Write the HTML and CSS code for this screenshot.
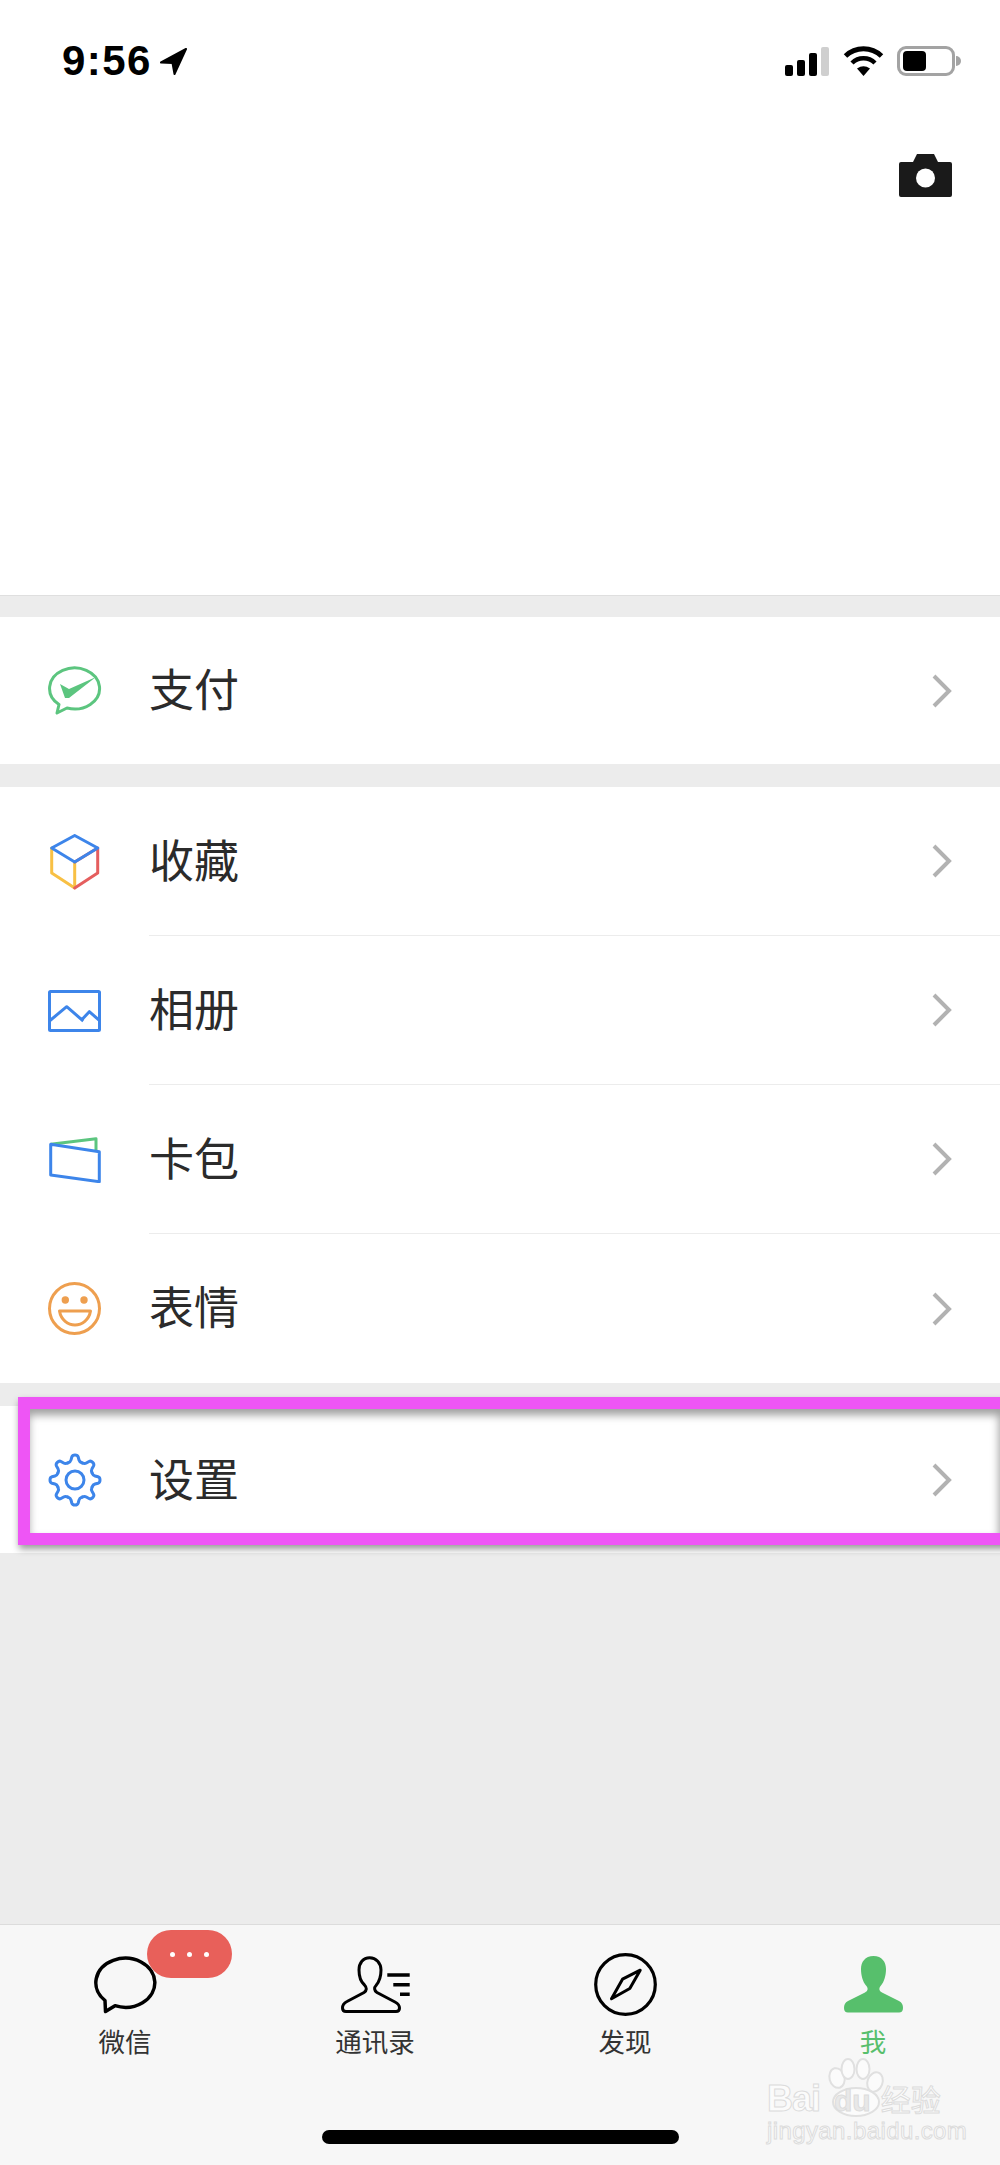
FILE: index.html
```html
<!DOCTYPE html>
<html lang="zh-CN">
<head>
    <meta charset="UTF-8">
    <title>我</title>
    <link rel="stylesheet" href="styles.css">
</head>
<body>
<div class="page">
    <div class="profile">
        <div class="status-bar">
            <div class="status-left">
                <span class="time">9:56</span>
                <svg class="location" width="27" height="27" viewBox="0 0 27 27"><path d="M26 1 L1 14.5 L12.5 15 L14.5 26 Z" fill="#000" stroke="#000" stroke-width="2" stroke-linejoin="round"/></svg>
            </div>
            <div class="status-right">
                <div class="signal">
                    <i class="bar bar-1"></i>
                    <i class="bar bar-2"></i>
                    <i class="bar bar-3"></i>
                    <i class="bar bar-4"></i>
                </div>
                <svg width="41" height="30" viewBox="0 0 41 30"><path d="M2.5 10 A26 26 0 0 1 38.5 10" fill="none" stroke="#000" stroke-width="5"/><path d="M9 17 A16.5 16.5 0 0 1 32 17" fill="none" stroke="#000" stroke-width="4.5"/><path d="M20.5 30 L14 22.5 Q20.5 18 27 22.5 Z" fill="#000"/></svg>
                <div class="battery"><i class="battery-level"></i></div>
            </div>
        </div>
        <div class="camera-row">
            <svg width="53" height="43" viewBox="0 0 53 43"><path d="M0 10 Q0 8 2 8 H14 L18 0 H35 L39 8 H51 Q53 8 53 10 V41 Q53 43 51 43 H2 Q0 43 0 41 Z" fill="#1a1a1a"/><circle cx="26.5" cy="24" r="9.5" fill="#fff"/></svg>
        </div>
    </div>

    <div class="group first-group">
        <div class="row">
            <div class="row-icon">
                <svg width="54" height="50" viewBox="0 0 54 50"><path d="M11 38.5 A25 20.5 0 1 1 19 42 L9 47 Z" fill="none" stroke="#5cc57f" stroke-width="3" stroke-linejoin="round"/><path d="M12 18 L21 23 L48 11 L21 32 L17 32 Z" fill="#5cc57f"/></svg>
            </div>
            <div class="row-body">
                <span class="row-label">支付</span>
                <svg class="chevron" width="20" height="34" viewBox="0 0 20 34"><path d="M2 2 L17 17 L2 32" fill="none" stroke="#b2b2b2" stroke-width="4"/></svg>
            </div>
        </div>
    </div>

    <div class="group">
        <div class="row">
            <div class="row-icon">
                <svg width="50" height="56" viewBox="0 0 50 56" fill="none" stroke-width="3" stroke-linecap="round" stroke-linejoin="round"><path d="M1.7 14 V39 L24.7 54 V28" stroke="#f8c044"/><path d="M24.7 54 L47.7 39 V14 L24.7 28" stroke="#e55e5e"/><path d="M24.7 1.5 L47.7 14 L24.7 28 L1.7 14 Z" stroke="#3d85ea"/></svg>
            </div>
            <div class="row-body">
                <span class="row-label">收藏</span>
                <svg class="chevron" width="20" height="34" viewBox="0 0 20 34"><path d="M2 2 L17 17 L2 32" fill="none" stroke="#b2b2b2" stroke-width="4"/></svg>
            </div>
        </div>
        <div class="row">
            <div class="row-icon">
                <svg class="icon-nudge" width="53" height="42" viewBox="0 0 53 42" fill="none" stroke="#3d85ea" stroke-width="3" stroke-linejoin="round"><rect x="1.5" y="1.5" width="50" height="39" rx="1"/><path d="M2 30.5 L18.7 16.7 L35.3 31 M34 29.5 L41.3 21.7 L51.3 30.3"/></svg>
            </div>
            <div class="row-body">
                <span class="row-label">相册</span>
                <svg class="chevron" width="20" height="34" viewBox="0 0 20 34"><path d="M2 2 L17 17 L2 32" fill="none" stroke="#b2b2b2" stroke-width="4"/></svg>
            </div>
        </div>
        <div class="row">
            <div class="row-icon">
                <svg width="52" height="46" viewBox="0 0 52 46" fill="none" stroke-width="3" stroke-linejoin="round"><path d="M1.7 7.3 L47 1.7 V13" stroke="#5cc57f"/><path d="M1.7 7.3 L50.3 14.7 V44.7 L1.7 38 Z" stroke="#3d85ea"/></svg>
            </div>
            <div class="row-body">
                <span class="row-label">卡包</span>
                <svg class="chevron" width="20" height="34" viewBox="0 0 20 34"><path d="M2 2 L17 17 L2 32" fill="none" stroke="#b2b2b2" stroke-width="4"/></svg>
            </div>
        </div>
        <div class="row">
            <div class="row-icon">
                <svg class="icon-nudge" width="53" height="53" viewBox="0 0 53 53" fill="none" stroke="#ee9f4f" stroke-width="3" stroke-linejoin="round"><circle cx="26.5" cy="26.5" r="25"/><circle cx="17.3" cy="18" r="3.7" fill="#ee9f4f" stroke="none"/><circle cx="36" cy="18" r="3.7" fill="#ee9f4f" stroke="none"/><path d="M11.5 29 H42.5 C41 38 34 43 27 43 C20 43 13 38 11.5 29 Z"/></svg>
            </div>
            <div class="row-body">
                <span class="row-label">表情</span>
                <svg class="chevron" width="20" height="34" viewBox="0 0 20 34"><path d="M2 2 L17 17 L2 32" fill="none" stroke="#b2b2b2" stroke-width="4"/></svg>
            </div>
        </div>
    </div>

    <div class="group">
        <div class="row row-settings">
            <div class="row-icon">
                <svg width="54" height="54" viewBox="-27 -27 54 54" fill="none" stroke="#3d85ea" stroke-width="3" stroke-linecap="round">
                    <defs><path id="gear-tooth" d="M-7.08 -17.09 Q-4.5 -18 -4 -20 L-3.2 -23 Q-2.6 -25 0 -25 Q2.6 -25 3.2 -23 L4 -20 Q4.5 -18 7.08 -17.09"/></defs>
                    <use href="#gear-tooth"/>
                    <use href="#gear-tooth" transform="rotate(45)"/>
                    <use href="#gear-tooth" transform="rotate(90)"/>
                    <use href="#gear-tooth" transform="rotate(135)"/>
                    <use href="#gear-tooth" transform="rotate(180)"/>
                    <use href="#gear-tooth" transform="rotate(225)"/>
                    <use href="#gear-tooth" transform="rotate(270)"/>
                    <use href="#gear-tooth" transform="rotate(315)"/>
                    <circle r="9"/>
                </svg>
            </div>
            <div class="row-body">
                <span class="row-label">设置</span>
                <svg class="chevron" width="20" height="34" viewBox="0 0 20 34"><path d="M2 2 L17 17 L2 32" fill="none" stroke="#b2b2b2" stroke-width="4"/></svg>
            </div>
            <div class="highlight"></div>
        </div>
    </div>

    <div class="spacer"></div>

    <div class="tabbar">
        <div class="tabs">
            <div class="tab">
                <div class="tab-icon">
                    <svg width="63" height="58" viewBox="0 0 63 58"><path d="M11 44.5 A29.5 24.5 0 1 1 21 49.7 L11.5 55.5 Z" fill="none" stroke="#000" stroke-width="3.5" stroke-linejoin="round"/></svg>
                    <div class="badge"><i></i><i></i><i></i></div>
                </div>
                <span class="tab-label">微信</span>
            </div>
            <div class="tab">
                <div class="tab-icon">
                    <svg width="69" height="57" viewBox="0 0 69 57" fill="none" stroke="#000"><path d="M28.7 1.7 C22 1.7 18 7 18 14 C18 21 20 26 23.5 29 C26 31.5 26 34.5 23 36.5 L6 45.5 C2 47.5 1.5 50 1.5 52 C1.5 55 3 55.5 5 55.5 H55 C57 55.5 58.5 55 58.5 52 C58.5 50 57 47.5 54 46 L36 36.5 C33 34.5 33 31.5 35 29.5 C38 26 40 21 40 14 C40 7 35 1.7 28.7 1.7 Z" stroke-width="3"/><path d="M46.3 19 H68.7 M52.3 28.7 H68.7 M59 38.3 H68.7" stroke-width="3.5"/></svg>
                </div>
                <span class="tab-label">通讯录</span>
            </div>
            <div class="tab">
                <div class="tab-icon">
                    <svg width="63" height="63" viewBox="-31.5 -31.5 63 63" fill="none" stroke="#000"><circle r="29.8" stroke-width="3.2"/><path d="M14.7 -14.3 L4.3 4 L-14 14.3 L-3 -5.3 Z" stroke-width="3" stroke-linejoin="round"/></svg>
                </div>
                <span class="tab-label">发现</span>
            </div>
            <div class="tab tab-active">
                <div class="tab-icon">
                    <svg width="59" height="57" viewBox="0 0 59 57"><path d="M29.5 0 C21 0 17 6 17 13 C17 20 19 26 22 29.5 C24.5 32 24 35 21 36.5 L4 45 C1 46.5 0 49 0 52 C0 55 1.5 56.5 4 56.5 H55 C57.5 56.5 59 55 59 52 C59 49 58 46.5 55 45 L38 36.5 C35 35 34.5 32 37 29.5 C40 26 42 20 42 13 C42 6 38 0 29.5 0 Z" fill="#57bf6c"/></svg>
                </div>
                <span class="tab-label">我</span>
            </div>
        </div>
        <div class="home-bar"></div>
        <div class="watermark">
            <svg class="paw" width="60" height="60" viewBox="0 0 60 60" fill="#fbfbfb" stroke="#e0e0e0" stroke-width="2"><ellipse cx="10" cy="20" rx="7.5" ry="10" transform="rotate(-15 10 20)"/><ellipse cx="21" cy="11" rx="6.5" ry="10"/><ellipse cx="36" cy="11" rx="6.5" ry="10"/><ellipse cx="48" cy="24" rx="7.5" ry="10" transform="rotate(20 48 24)"/><ellipse cx="29" cy="44" rx="23" ry="14"/></svg>
            <div class="wm-logo"><span class="wm-bai">Bai</span><span class="wm-du">du</span><span class="wm-cn">经验</span></div>
            <div class="wm-url">jingyan.baidu.com</div>
        </div>
    </div>
</div>
</body>
</html>
```

FILE: styles.css
```css
html, body {
    margin: 0;
    padding: 0;
}
body {
    font-family: "Noto Sans CJK SC", "Liberation Sans", sans-serif;
    background-color: #ececec;
}
svg {
    display: block;
}
.page {
    display: flex;
    flex-direction: column;
    height: 2165px;
    overflow: hidden;
}

/* top area */
.profile {
    height: 595px;
    background-color: #fff;
    border-bottom: 1px solid #dfdfdf;
}
.status-bar {
    display: flex;
    justify-content: space-between;
    align-items: center;
    height: 30px;
    padding: 46px 45px 0 62px;
}
.status-left {
    display: flex;
    align-items: center;
    gap: 8px;
}
.time {
    font-family: "Liberation Sans", sans-serif;
    font-size: 42px;
    font-weight: bold;
    line-height: 30px;
    letter-spacing: 1.4px;
    color: #000;
}
.status-right {
    display: flex;
    align-items: center;
    gap: 13px;
}
.signal {
    display: flex;
    align-items: flex-end;
    gap: 4px;
    margin-right: 1px;
    height: 29px;
}
.bar {
    width: 8px;
    background-color: #000;
    border-radius: 2px;
}
.bar-1 { height: 11px; }
.bar-2 { height: 16px; }
.bar-3 { height: 23px; }
.bar-4 { height: 29px; background-color: #cfcfcf; }
.battery {
    position: relative;
    box-sizing: border-box;
    width: 58px;
    height: 30px;
    padding: 2px 3px;
    border: 3px solid #a3a3a3;
    border-radius: 9px;
}
.battery::after {
    content: "";
    position: absolute;
    top: 7px;
    right: -9px;
    width: 5px;
    height: 10px;
    background-color: #a3a3a3;
    border-radius: 0 5px 5px 0;
}
.battery-level {
    display: block;
    width: 23px;
    height: 20px;
    background-color: #000;
    border-radius: 4px;
}
.camera-row {
    display: flex;
    justify-content: flex-end;
    padding: 78px 48px 0 0;
}

/* list */
.group {
    margin-top: 23px;
    background-color: #fff;
}
.first-group {
    margin-top: 21px;
}
.row {
    position: relative;
    display: flex;
    height: 149px;
}
.first-group .row,
.row-settings {
    height: 147px;
}
.row-icon {
    display: flex;
    align-items: center;
    justify-content: center;
    flex-shrink: 0;
    width: 149px;
    box-sizing: border-box;
    padding-left: 1px;
}
.icon-nudge {
    margin-left: -2px;
}
.row-body {
    flex: 1;
    display: flex;
    align-items: center;
    justify-content: space-between;
    padding-right: 48px;
    border-bottom: 1px solid #ececec;
}
.row:last-child .row-body {
    border-bottom: none;
}
.row-label {
    margin-top: -5px;
    font-size: 45px;
    line-height: 60px;
    color: #2b2b2b;
}
.row-settings .row-label {
    margin-top: -3px;
}
.highlight {
    position: absolute;
    top: -9px;
    left: 18px;
    right: -12px;
    bottom: 8px;
    border: 12px solid #ee55f5;
    box-shadow: 1px 4px 7px rgba(0, 0, 0, 0.4), inset -1px 6px 8px rgba(0, 0, 0, 0.38);
}
.spacer {
    flex: 1;
}

/* bottom tabs */
.tabbar {
    position: relative;
    height: 240px;
    background-color: #f7f7f7;
    border-top: 1px solid #dcdcdc;
}
.tabs {
    display: grid;
    grid-template-columns: repeat(4, 1fr);
    padding-top: 28px;
}
.tab {
    display: flex;
    flex-direction: column;
    align-items: center;
}
.tab-active {
    padding-right: 4px;
}
.tab-icon {
    position: relative;
    display: flex;
    align-items: center;
    justify-content: center;
    height: 63px;
}
.tab-label {
    margin-top: 7px;
    font-size: 26.5px;
    line-height: 36px;
    color: #333;
}
.tab-active .tab-label {
    color: #57bf6c;
}
.badge {
    position: absolute;
    top: -23px;
    left: 53px;
    display: flex;
    align-items: center;
    justify-content: center;
    gap: 12px;
    width: 85px;
    height: 48px;
    background-color: #e8605a;
    border-radius: 24px;
}
.badge i {
    width: 5px;
    height: 5px;
    background-color: #fff;
    border-radius: 50%;
}
.home-bar {
    width: 357px;
    height: 14px;
    margin: 71px auto 0;
    background-color: #000;
    border-radius: 7px;
}
.watermark {
    position: absolute;
    top: 133px;
    left: 767px;
    width: 180px;
    color: #fbfbfb;
    font-family: "Liberation Sans", sans-serif;
    -webkit-text-stroke: 1px #dcdcdc;
}
.paw {
    position: absolute;
    top: 0;
    left: 60px;
}
.wm-logo {
    position: relative;
    display: flex;
    align-items: baseline;
    height: 60px;
    padding-top: 24px;
    box-sizing: border-box;
}
.wm-bai {
    font-size: 36px;
    font-weight: bold;
    line-height: 32px;
    letter-spacing: -1px;
}
.wm-du {
    margin-left: 14px;
    font-size: 30px;
    font-weight: bold;
    line-height: 32px;
    color: #e8e8e8;
}
.wm-cn {
    margin-left: 10px;
    font-family: "Noto Sans CJK SC", sans-serif;
    font-size: 30px;
    line-height: 32px;
}
.wm-url {
    font-size: 24px;
    line-height: 26px;
    letter-spacing: 0.4px;
}
```
